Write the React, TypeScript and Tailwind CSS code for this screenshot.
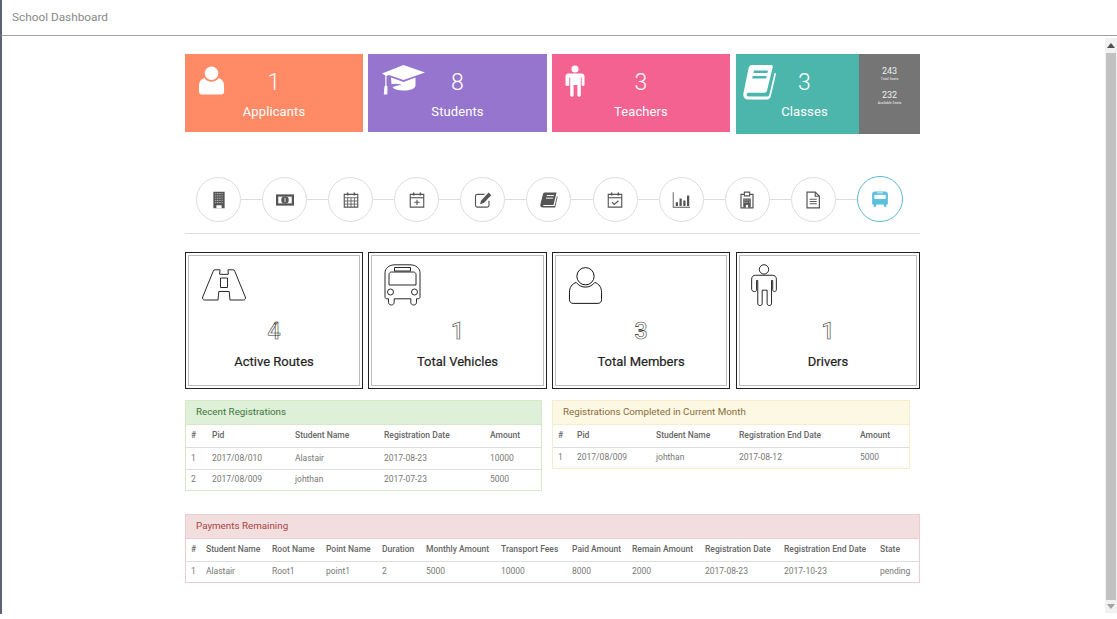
import React from 'react'

const roboto = "font-['Roboto',sans-serif]"

/* ---------- icons ---------- */
function PersonIcon({ className }: { className?: string }) {
  return (
    <svg viewBox="0 0 27 30" className={className}>
      <circle cx="13.5" cy="7.5" r="7" />
      <path d="M6 12.500c2 2.600 4.500 3.800 7.500 3.800s5.500-1.200 7.500-3.800c3.500 1.200 5.500 4 5.500 8v6c0 1.900-1.300 3-3 3H3.500c-1.700 0-3-1.100-3-3v-6c0-4 2-6.800 5.500-8z" />
    </svg>
  )
}

function ManIcon({ className }: { className?: string }) {
  return (
    <svg viewBox="0 0 20 32" className={className}>
      <circle cx="10" cy="4" r="3.600" />
      <path d="M3.500 8.500h13c1.800 0 3 1.200 3 3v8c0 1-.6 1.600-1.400 1.600S16.700 20.500 16.700 19.500V12.500h-.9V30c0 1.200-.7 1.800-1.700 1.800s-1.700-.6-1.700-1.800V20h-1.500H8.600v10c0 1.200-.7 1.800-1.700 1.800s-1.700-.6-1.700-1.800V12.500h-.9v7c0 1-.6 1.600-1.400 1.600S.5 20.500.5 19.500v-8c0-1.800 1.200-3 3-3z" />
    </svg>
  )
}

function CapIcon({ className }: { className?: string }) {
  return (
    <svg viewBox="0 0 43 30" className={className} fill="currentColor">
      <path d="M21.500 0L43 7.500 21.500 15 7 10l-2.500 1v9.500l1 1-.2 8H1.800l.6-8 .9-1V10.400L0 8.500z" />
      <path d="M9 12.500l12.500 4.500L33.500 12.500v8c0 3-5.500 5-12 5-5 0-9-1-11-3 2-1.800 5.500-2.600 9.500-2.600-3.500-1.200-7.500-1.500-10.500-.6z" />
    </svg>
  )
}

function BookIcon({ className }: { className?: string }) {
  return (
    <svg viewBox="0 0 33 35" className={className} fill="currentColor">
      <path d="M9 0h19c1.500 0 2 1 1.700 2.300L24 25.500c-.4 1.500-1.300 2.200-2.800 2.200H6c-1.500 0-2.400.6-2.400 1.800S4.500 31.500 6 31.500h17.500c1.800 0 2.600-.7 3-2.300l5-21.200c1-.2 1.600.5 1.300 1.800l-5 21.500c-.5 2-1.800 3.200-3.800 3.200H5.500C2 34.500 0 32.300 .3 29L5.500 3.500C6 1.200 7 0 9 0z" />
      <path d="M11 5.500h14l-.6 2.400h-14zM9.700 11h14l-.6 2.400h-14z" fill="#4db6ac" />
    </svg>
  )
}

function RoadIcon({ className }: { className?: string }) {
  return (
    <svg viewBox="0 0 44 32" className={className} fill="#fff" stroke="#111" strokeWidth="0.9">
      <path d="M13 .8h5l-.3 4.500h8.600L26 .8h5c1 0 1.400.4 1.700 1.200L43.300 28c.5 1.700-.3 3-2 3H28l-.8-8.500H16.800L16 31H2.700c-1.700 0-2.500-1.300-2-3L11.300 2c.3-.8.700-1.200 1.700-1.200z" />
      <path d="M18.500 9h7v9.500h-7z" />
    </svg>
  )
}

function BusOutlineIcon({ className }: { className?: string }) {
  return (
    <svg viewBox="0 0 37 42" className={className} fill="#fff" stroke="#111" strokeWidth="0.9">
      <path d="M11 .8h15c6 0 10 3.500 10 8v24c0 1.400-.8 2-2 2h-1.500v3.500c0 1.600-1.200 2.700-2.800 2.700s-2.900-1.100-2.900-2.700v-3.500H10.200v3.500c0 1.600-1.300 2.700-2.900 2.700s-2.800-1.100-2.800-2.700v-3.500H3c-1.200 0-2-.6-2-2v-24c0-4.500 4-8 10-8z" />
      <path d="M10.500 3.500h16v3.500h-16z" />
      <path d="M7.500 8h22c1.300 0 2.500 1 2.500 2.500V21H5V10.500C5 9 6.200 8 7.500 8z" />
      <circle cx="6.500" cy="28" r="3" />
      <circle cx="30.500" cy="28" r="3" />
    </svg>
  )
}

/* small step icons, all on a 24 box */
const stepIcons: React.ReactNode[] = [
  <g key="building">
    <path d="M4.500 1h15v22h-15z" fill="currentColor" />
    <path d="M7 3.500h10M7 6.500h10M7 9.500h10M7 12.500h10M7 15.500h10" stroke="#ccc" strokeWidth="1.300" strokeDasharray="1.300 1" fill="none" />
    <path d="M8.500 19h7v4h-7z" fill="#fff" />
  </g>,
  <g key="money">
    <path d="M0 4.500h24v15H0z" fill="currentColor" />
    <path d="M3 7.500h18v9H3z" fill="#fff" />
    <circle cx="12" cy="12" r="5" fill="currentColor" />
    <path d="M12 9v6" stroke="#fff" strokeWidth="1.200" />
  </g>,
  <g key="calendar" fill="none" stroke="currentColor" strokeWidth="1.500">
    <path d="M3 4.500h18v17H3z" />
    <path d="M3 9h18M3 13.300h18M3 17.500h18M7.500 9v12.500M12 9v12.500M16.500 9v12.500" strokeWidth="1.100" />
    <path d="M7.500 2v4M16.500 2v4" strokeWidth="2" />
  </g>,
  <g key="calendar-plus" fill="none" stroke="currentColor" strokeWidth="1.500">
    <path d="M3 4.500h18v17H3z" />
    <path d="M3 9h18" />
    <path d="M7.500 2v4M16.500 2v4" strokeWidth="2" />
    <path d="M12 11.500v7M8.500 15h7" />
  </g>,
  <g key="edit">
    <path d="M20 13v6c0 1.500-1 2.500-2.500 2.500H4.500C3 21.500 2 20.500 2 19V7c0-1.500 1-2.500 2.500-2.500H14" fill="none" stroke="currentColor" strokeWidth="1.500" />
    <path d="M19.500 2L23 5.500 13 16l-5 1.500L9.500 12.500z" fill="currentColor" />
  </g>,
  <g key="book">
    <path d="M7 2h15l-4 16.500H5.500c-1.500 0-2 1.500-.5 1.500h14.500l3-13 1 .5-3.200 14.500H4c-3 0-4-2-3.500-4.500L4 4c.4-1.300 1.500-2 3-2z" fill="currentColor" />
    <path d="M9 6h9.500M8 9.500h9.500" stroke="#fff" strokeWidth="1.300" />
  </g>,
  <g key="calendar-check" fill="none" stroke="currentColor" strokeWidth="1.500">
    <path d="M3 4.500h18v17H3z" />
    <path d="M3 9h18" />
    <path d="M7.500 2v4M16.500 2v4" strokeWidth="2" />
    <path d="M8 15l3 3 5.500-5" />
  </g>,
  <g key="chart" fill="currentColor">
    <path d="M1 1.500h1.200V21H24v1.300H1z" />
    <path d="M5 15h3v5H5zM10 10h3v10h-3zM15 12.500h3v7.500h-3zM20 6h3v14h-3z" />
  </g>,
  <g key="clipboard">
    <path d="M4 4.500h16v18H4z" fill="none" stroke="currentColor" strokeWidth="1.600" />
    <path d="M8.500 1.500h7v5h-7z" fill="#fff" stroke="currentColor" strokeWidth="1.500" />
    <path d="M7 10h10v12H7z" fill="currentColor" />
    <path d="M8.500 12h1.500M11.500 12h1.500M14.500 12h1M8.500 15h1.500M11.500 15h1.500M14.500 15h1" stroke="#fff" strokeWidth="1" />
    <path d="M10.500 18.500h3V22h-3z" fill="#fff" />
  </g>,
  <g key="doc" fill="none" stroke="currentColor" strokeWidth="1.600">
    <path d="M4 1.500h11l5.500 5.500v15.500H4z" />
    <path d="M15 1.500V7h5.500" />
    <path d="M7.500 11h9.500M7.500 14h9.500M7.500 17h9.500" strokeWidth="1.300" />
  </g>,
  <g key="bus">
    <path d="M5 2h14c2 0 3.500 1.500 3.500 3.500V18c0 .8-.5 1.300-1.300 1.300h-.7v2c0 .9-.7 1.500-1.700 1.500s-1.600-.6-1.600-1.500v-2H6.800v2c0 .9-.7 1.500-1.600 1.500s-1.700-.6-1.700-1.500v-2h-.7c-.8 0-1.300-.5-1.300-1.300V5.500C1.500 3.500 3 2 5 2z" fill="currentColor" />
    <path d="M4.500 6.500h15v5.500h-15z" fill="#fff" />
    <path d="M8 3.800h8" stroke="#fff" strokeWidth="1" />
  </g>
]

/* ---------- top cards ---------- */
function SummaryCard({ width, color, icon, count, label }: { width: string; color: string; icon: React.ReactNode; count: string; label: string }) {
  return (
    <div className={`relative h-[78px] ${width} ${color} text-white text-center`}>
      {icon}
      <div className="pt-[15px] text-[23px] leading-[28px] font-light">{count}</div>
      <div className="pt-[6px] text-[13px] leading-[18px] tracking-[0.1px]">{label}</div>
    </div>
  )
}

function StatCard({ width, icon, count, label }: { width: string; icon: React.ReactNode; count: string; label: string }) {
  return (
    <div className={`relative h-[137px] ${width} border border-[#222] shadow-[inset_0_0_0_2px_#fff,inset_0_0_0_3px_#bbb] text-center bg-white`}>
      {icon}
      <div className="pt-[65px] text-[23px] leading-[28px] font-medium text-white [-webkit-text-stroke:0.6px_#333]">{count}</div>
      <div className="pt-[7px] text-[13px] leading-[18px] text-[#222] [-webkit-text-stroke:0.2px_#222]">{label}</div>
    </div>
  )
}

/* ---------- tables ---------- */
type Column = { title: string; width: string }

function DataPanel({ title, border, head, titleColor, width, columns, rows }: { title: string; border: string; head: string; titleColor: string; width: string; columns: Column[]; rows: string[][] }) {
  return (
    <div className={`${width} border ${border} bg-white`}>
      <div className={`h-[24px] px-[10px] leading-[21px] text-[9.8px] border-b ${border} ${head} ${titleColor}`}>{title}</div>
      <table className="w-full table-fixed border-collapse text-[8.5px]">
        <thead>
          <tr className="h-[22px] border-b border-[#ddd]">
            {columns.map(c => (
              <th key={c.title} className={`${c.width} px-[5px] text-left font-medium text-[#666] whitespace-nowrap`}>{c.title}</th>
            ))}
          </tr>
        </thead>
        <tbody>
          {rows.map((r, i) => (
            <tr key={i} className="h-[22px] border-b border-[#ddd] last:h-[21px] last:border-b-0">
              {r.map((v, j) => (
                <td key={j} className="px-[5px] text-[#777] whitespace-nowrap">{v}</td>
              ))}
            </tr>
          ))}
        </tbody>
      </table>
    </div>
  )
}

function Scrollbar() {
  return (
    <div className="w-[12px] h-[575px] mt-[2px] bg-[#f1f1f1] flex flex-col">
      <div className="h-[15px] flex items-center justify-center">
        <div className="w-0 h-0 border-x-[4px] border-x-transparent border-b-[5px] border-b-[#505050]" />
      </div>
      <div className="flex-1 ml-px mr-px bg-[#c1c1c1]" />
      <div className="h-[13px] flex items-center justify-center">
        <div className="w-0 h-0 border-x-[4px] border-x-transparent border-t-[5px] border-t-[#a3a3a3]" />
      </div>
    </div>
  )
}

export default function App() {
  return (
    <div className={`${roboto} h-[619px] overflow-hidden bg-white flex flex-col`}>
      <div className="h-[36px] shrink-0 border-b border-[#a0a0a0] border-l-2 border-l-[#5a6472] pl-[10px] leading-[34px] text-[11.8px] text-[#888]">
        School Dashboard
      </div>

      <div className="flex h-[578px]">
        <div className="w-[2px] bg-[#5a6472]" />
        <div className="flex-1">
          <div className="w-[735px] ml-[183px] pt-[18px]">
            {/* summary cards */}
            <div className="flex items-start gap-[5px]">
              <SummaryCard width="w-[178px]" color="bg-[#ff8a65]" count="1" label="Applicants"
                icon={<PersonIcon className="absolute left-[13px] top-[12px] w-[27px] h-[29px] fill-white" />} />
              <SummaryCard width="w-[179px]" color="bg-[#9575cd]" count="8" label="Students"
                icon={<CapIcon className="absolute left-[14px] top-[11px] w-[43px] h-[30px] text-white" />} />
              <SummaryCard width="w-[178px]" color="bg-[#f46292]" count="3" label="Teachers"
                icon={<ManIcon className="absolute left-[13px] top-[11px] w-[20px] h-[32px] fill-white" />} />
              <div className="ml-px flex w-[184px] h-[80px]">
                <div className="relative w-[123px] pl-[14px] bg-[#4db6ac] text-white text-center">
                  <BookIcon className="absolute left-[7px] top-[11px] w-[33px] h-[35px]" />
                  <div className="pt-[15px] text-[23px] leading-[28px] font-light">3</div>
                  <div className="pt-[6px] text-[13px] leading-[18px] tracking-[0.1px]">Classes</div>
                </div>
                <div className="flex-1 bg-[#757575] text-[#eee] text-center">
                  <div className="pt-[11px] text-[9px] leading-[12px]">243</div>
                  <div className="text-[3.5px] leading-[4px]">Total Seats</div>
                  <div className="pt-[8px] text-[9px] leading-[12px]">232</div>
                  <div className="text-[3.5px] leading-[4px]">Available Seats</div>
                </div>
              </div>
            </div>

            {/* step row */}
            <div className="mt-[43px] h-[57px] border-b border-[#ddd] pl-[11px] pr-[17px] flex items-start">
              {stepIcons.map((icon, i) => {
                const active = i === stepIcons.length - 1
                return (
                  <React.Fragment key={i}>
                    {i > 0 && <div className="flex-1 h-px mt-[22px] bg-[#ddd]" />}
                    <div className={active
                      ? 'w-[46px] h-[46px] -mt-px shrink-0 rounded-full border border-[#5bb8d8] flex items-center justify-center text-[#5bc0de]'
                      : 'w-[45px] h-[45px] shrink-0 rounded-full border border-[#ddd] flex items-center justify-center text-[#555]'}>
                      <svg viewBox="0 0 24 24" className="w-[18px] h-[18px]">{icon}</svg>
                    </div>
                  </React.Fragment>
                )
              })}
            </div>

            {/* transport stats */}
            <div className="mt-[18px] flex items-start gap-[5px]">
              <StatCard width="w-[178px]" count="4" label="Active Routes"
                icon={<RoadIcon className="absolute left-[16px] top-[16px] w-[44px] h-[32px]" />} />
              <StatCard width="w-[179px]" count="1" label="Total Vehicles"
                icon={<BusOutlineIcon className="absolute left-[15px] top-[11px] w-[37px] h-[42px]" />} />
              <StatCard width="w-[178px]" count="3" label="Total Members"
                icon={<PersonIcon className="absolute left-[15px] top-[14px] w-[35px] h-[37px] fill-white stroke-[#111] stroke-[0.8]" />} />
              <div className="ml-px">
                <StatCard width="w-[184px]" count="1" label="Drivers"
                  icon={<ManIcon className="absolute left-[14px] top-[11px] w-[26px] h-[42px] fill-white stroke-[#111] stroke-[0.7]" />} />
              </div>
            </div>

            {/* registrations */}
            <div className="mt-[11px] flex items-start gap-[10px]">
              <DataPanel
                title="Recent Registrations"
                width="w-[357px]"
                border="border-[#d6e9c6]"
                head="bg-[#dff0d8]"
                titleColor="text-[#3c763d]"
                columns={[
                  { title: '#', width: 'w-[21px]' },
                  { title: 'Pid', width: 'w-[83px]' },
                  { title: 'Student Name', width: 'w-[89px]' },
                  { title: 'Registration Date', width: 'w-[106px]' },
                  { title: 'Amount', width: 'w-[56px]' }
                ]}
                rows={[
                  ['1', '2017/08/010', 'Alastair', '2017-08-23', '10000'],
                  ['2', '2017/08/009', 'johthan', '2017-07-23', '5000']
                ]}
              />
              <DataPanel
                title="Registrations Completed in Current Month"
                width="w-[358px]"
                border="border-[#faebcc]"
                head="bg-[#fcf8e3]"
                titleColor="text-[#8a6d3b]"
                columns={[
                  { title: '#', width: 'w-[19px]' },
                  { title: 'Pid', width: 'w-[79px]' },
                  { title: 'Student Name', width: 'w-[83px]' },
                  { title: 'Registration End Date', width: 'w-[121px]' },
                  { title: 'Amount', width: 'w-[54px]' }
                ]}
                rows={[['1', '2017/08/009', 'johthan', '2017-08-12', '5000']]}
              />
            </div>

            {/* payments */}
            <div className="mt-[23px]">
              <DataPanel
                title="Payments Remaining"
                width="w-[735px]"
                border="border-[#ebccd1]"
                head="bg-[#f2dede]"
                titleColor="text-[#a94442]"
                columns={[
                  { title: '#', width: 'w-[15px]' },
                  { title: 'Student Name', width: 'w-[66px]' },
                  { title: 'Root Name', width: 'w-[54px]' },
                  { title: 'Point Name', width: 'w-[56px]' },
                  { title: 'Duration', width: 'w-[44px]' },
                  { title: 'Monthly Amount', width: 'w-[75px]' },
                  { title: 'Transport Fees', width: 'w-[71px]' },
                  { title: 'Paid Amount', width: 'w-[60px]' },
                  { title: 'Remain Amount', width: 'w-[73px]' },
                  { title: 'Registration Date', width: 'w-[79px]' },
                  { title: 'Registration End Date', width: 'w-[96px]' },
                  { title: 'State', width: 'w-[44px]' }
                ]}
                rows={[['1', 'Alastair', 'Root1', 'point1', '2', '5000', '10000', '8000', '2000', '2017-08-23', '2017-10-23', 'pending']]}
              />
            </div>
          </div>
        </div>
        <Scrollbar />
      </div>
    </div>
  )
}
